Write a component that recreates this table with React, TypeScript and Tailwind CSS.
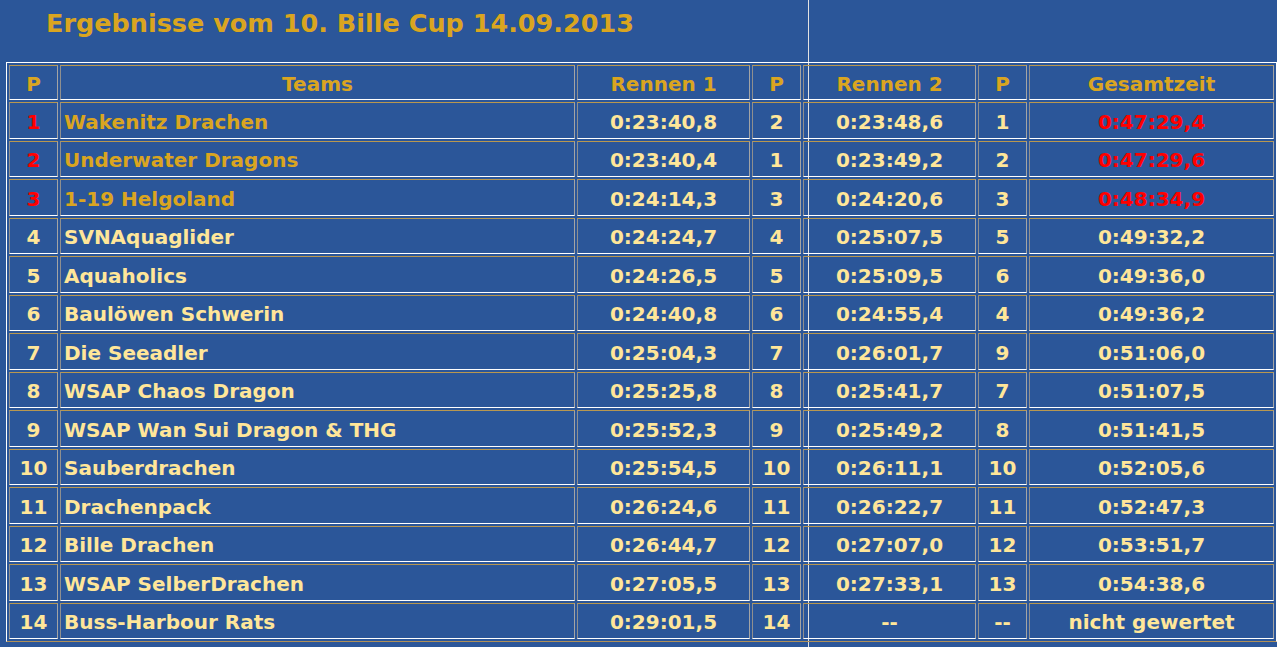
import React from 'react';

type Row = {
  p: string;
  team: string;
  r1: string;
  p1: string;
  r2: string;
  p2: string;
  total: string;
};

const rows: Row[] = [
  { p: '1', team: 'Wakenitz Drachen', r1: '0:23:40,8', p1: '2', r2: '0:23:48,6', p2: '1', total: '0:47:29,4' },
  { p: '2', team: 'Underwater Dragons', r1: '0:23:40,4', p1: '1', r2: '0:23:49,2', p2: '2', total: '0:47:29,6' },
  { p: '3', team: '1-19 Helgoland', r1: '0:24:14,3', p1: '3', r2: '0:24:20,6', p2: '3', total: '0:48:34,9' },
  { p: '4', team: 'SVNAquaglider', r1: '0:24:24,7', p1: '4', r2: '0:25:07,5', p2: '5', total: '0:49:32,2' },
  { p: '5', team: 'Aquaholics', r1: '0:24:26,5', p1: '5', r2: '0:25:09,5', p2: '6', total: '0:49:36,0' },
  { p: '6', team: 'Baulöwen Schwerin', r1: '0:24:40,8', p1: '6', r2: '0:24:55,4', p2: '4', total: '0:49:36,2' },
  { p: '7', team: 'Die Seeadler', r1: '0:25:04,3', p1: '7', r2: '0:26:01,7', p2: '9', total: '0:51:06,0' },
  { p: '8', team: 'WSAP Chaos Dragon', r1: '0:25:25,8', p1: '8', r2: '0:25:41,7', p2: '7', total: '0:51:07,5' },
  { p: '9', team: 'WSAP Wan Sui Dragon & THG', r1: '0:25:52,3', p1: '9', r2: '0:25:49,2', p2: '8', total: '0:51:41,5' },
  { p: '10', team: 'Sauberdrachen', r1: '0:25:54,5', p1: '10', r2: '0:26:11,1', p2: '10', total: '0:52:05,6' },
  { p: '11', team: 'Drachenpack', r1: '0:26:24,6', p1: '11', r2: '0:26:22,7', p2: '11', total: '0:52:47,3' },
  { p: '12', team: 'Bille Drachen', r1: '0:26:44,7', p1: '12', r2: '0:27:07,0', p2: '12', total: '0:53:51,7' },
  { p: '13', team: 'WSAP SelberDrachen', r1: '0:27:05,5', p1: '13', r2: '0:27:33,1', p2: '13', total: '0:54:38,6' },
  { p: '14', team: 'Buss-Harbour Rats', r1: '0:29:01,5', p1: '14', r2: '--', p2: '--', total: 'nicht gewertet' },
];

// classic html table cell look: tan top, grey left/right, white bottom
const cell =
  'border border-t-[#b8974f] border-l-[#8f8f8f] border-r-[#a4a4a4] border-b-white p-0 pt-[3px] align-middle';

export default function App() {
  return (
    <div
      className="relative min-h-screen h-[647px] bg-[#2b5699] overflow-hidden"
      style={{ fontFamily: '"Comic Sans MS", "DejaVu Sans", sans-serif' }}
    >
      {/* divider line of the page frame */}
      <div className="absolute left-[808px] top-0 bottom-0 w-px bg-[#e2e2e2]" />

      <div className="relative">
        <div className="h-[62px] pl-[46px] pt-[8px]">
          <h1 className="text-[25.5px] leading-[30px] font-bold text-[#daa520]">
            Ergebnisse vom 10. Bille Cup 14.09.2013
          </h1>
        </div>

        <table className="ml-[6px] w-[1271px] table-fixed border-separate border-spacing-[2px] border border-t-white border-l-white border-r-white border-b-[#b09058] text-[20px] font-bold">
          <thead>
            <tr className="h-[35px] text-[#daa520]">
              <th className={`${cell} w-[49px] font-bold`}>P</th>
              <th className={`${cell} w-[515px] font-bold`}>Teams</th>
              <th className={`${cell} w-[173px] font-bold`}>Rennen 1</th>
              <th className={`${cell} w-[49px] font-bold`}>P</th>
              <th className={`${cell} w-[173px] font-bold`}>Rennen 2</th>
              <th className={`${cell} w-[49px] font-bold`}>P</th>
              <th className={`${cell} w-[245px] font-bold`}>Gesamtzeit</th>
            </tr>
          </thead>
          <tbody>
            {rows.map((r, i) => {
              const top = i < 3;
              return (
                <tr key={r.p} className="h-[36.5px] text-[#ffe699]">
                  <td className={`${cell} text-center ${top ? 'text-[#ff0000]' : ''}`}>{r.p}</td>
                  <td className={`${cell} pl-[3px] whitespace-nowrap ${top ? 'text-[#daa520]' : ''}`}>{r.team}</td>
                  <td className={`${cell} text-center`}>{r.r1}</td>
                  <td className={`${cell} text-center`}>{r.p1}</td>
                  <td className={`${cell} text-center`}>{r.r2}</td>
                  <td className={`${cell} text-center`}>{r.p2}</td>
                  <td className={`${cell} text-center ${top ? 'text-[#ff0000]' : ''}`}>{r.total}</td>
                </tr>
              );
            })}
          </tbody>
        </table>
      </div>
    </div>
  );
}
